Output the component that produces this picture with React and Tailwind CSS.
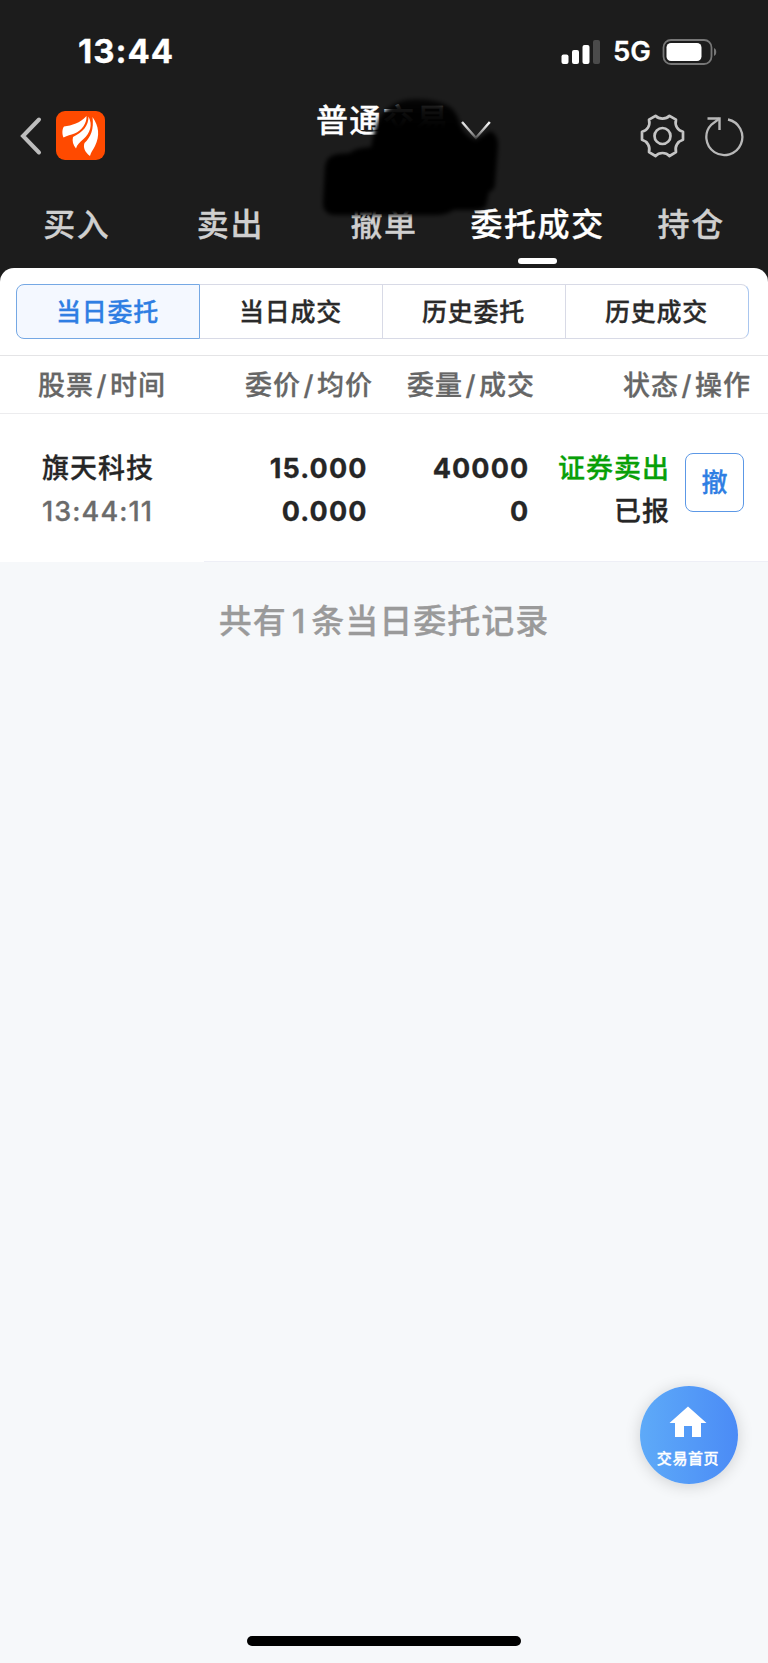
import { useState } from 'react';

const tabs = ['买入', '卖出', '撤单', '委托成交', '持仓'];
const segments = ['当日委托', '当日成交', '历史委托', '历史成交'];
const columns = [
  { top: '股票', bottom: '时间', className: 'w-[160px]' },
  { top: '委价', bottom: '均价', className: 'w-[175px] justify-end' },
  { top: '委量', bottom: '成交', className: 'w-[162px] justify-end' },
  { top: '状态', bottom: '操作', className: 'flex-1 justify-end' },
];

const orders = [
  {
    id: 1,
    name: '旗天科技',
    time: '13:44:11',
    price: '15.000',
    avg: '0.000',
    amount: '40000',
    filled: '0',
    side: '证券卖出',
    status: '已报',
  },
];

function StatusBar() {
  return (
    <div className="flex h-[102px] items-center justify-between pl-[78px] pr-[50px] pt-px text-white">
      <span className="text-[33px] font-bold leading-none tracking-[1px]">13:44</span>
      <div className="flex items-center">
        <svg width="40" height="26" viewBox="0 0 40 26" fill="#fff">
          <rect x="0.5" y="15.5" width="7" height="9.5" rx="2" />
          <rect x="11" y="11" width="7" height="14" rx="2" />
          <rect x="21.5" y="6" width="7" height="19" rx="2" />
          <rect x="32" y="1" width="7" height="24" rx="2" fill="#4b4b4b" />
        </svg>
        <span className="ml-[12px] w-[39px] text-[27.5px] font-semibold leading-none">5G</span>
        <svg className="ml-[10px]" width="56" height="26" viewBox="0 0 56 26">
          <rect x="1.5" y="1" width="48" height="24" rx="7.5" fill="none" stroke="#777" strokeWidth="1.8" />
          <rect x="4.5" y="4" width="35" height="18" rx="4.5" fill="#fff" />
          <path d="M52 9c3 1.2 3 6.8 0 8z" fill="#777" />
        </svg>
      </div>
    </div>
  );
}

function Header() {
  return (
    <div className="flex h-[82px] items-start justify-between pl-[19px] pr-[24px]">
      <div className="flex w-[297px] items-center pt-[9px]">
        <svg width="24" height="40" viewBox="0 0 24 40" fill="none" stroke="#bdbdbd" strokeWidth="4" strokeLinecap="round">
          <path d="M20 3.500L4 20l16 16.500" />
        </svg>
        <svg className="ml-[13px]" width="49" height="49" viewBox="0 0 49 49" fill="#fff">
          <rect width="49" height="49" rx="9" fill="#ff4a00" />
          <path d="M30.500 5C24 12 16 14.500 8 15.500 6 18 6 23 7.500 26.500c4-2 7-2.500 11-4C26 19.500 31 12 30.500 5z" />
          <path d="M32.500 5.500C32.500 15 27 21 17 26c-1 4 0 8 3 11.500 1-4 4-6.500 7.500-9.500C34 22 37 14 32.500 5.500z" />
          <path d="M36.500 6C38 18 35 26 28.500 32c-1.500 4 0 9 5.500 13 1-4 3-6 5-10 5-10 4-20-2.500-29z" />
        </svg>
      </div>
      <div className="flex w-[176px] items-start text-white">
        <span className="w-[136px] whitespace-nowrap pt-px text-[32px] font-medium leading-[36px] tracking-[1.3px]">
          普通交易
        </span>
        <svg className="ml-[9px] mt-[18px]" width="32" height="22" viewBox="0 0 32 22" fill="none" strokeWidth="2.5">
          <defs>
            <linearGradient id="fade" x1="0" y1="0" x2="0" y2="20" gradientUnits="userSpaceOnUse">
              <stop offset="0.2" stopColor="#f2f2f2" />
              <stop offset="1" stopColor="#555" />
            </linearGradient>
          </defs>
          <path d="M2 2l14 16L30 2" stroke="url(#fade)" />
        </svg>
      </div>
      <div className="flex w-[252px] items-center justify-end pt-[12px]">
        <svg width="45" height="44" viewBox="0 0 45 44" fill="none" stroke="#c4c4c4" strokeWidth="2.7" strokeLinejoin="round">
          <path d="M15.500 1.800C19 5.500 26 5.500 29.500 1.800L36 5.600C34.500 11.500 37.500 16.500 43 17.800V25.800C37.500 27.500 34.500 32.500 36 38.200L29.500 42C26 38 19 38 15.500 42L9 38.200C10.500 32.500 7.500 27.500 2 25.800V17.800C7.500 16.500 10.500 11.500 9 5.600Z" />
          <circle cx="22.5" cy="22" r="8" />
        </svg>
        <svg className="ml-[19px]" width="40" height="42" viewBox="0 0 40 42" fill="none" stroke="#b8b8b8" strokeWidth="2.3">
          <path d="M24 4.500A18 18 0 1 1 7.500 9.500L15.500 3.500" />
          <path d="M3.500 3.500H15.500V15" strokeWidth="2.4" />
        </svg>
      </div>
    </div>
  );
}

// Hand-drawn redaction over the account name
function Scribble() {
  return (
    <svg className="pointer-events-none absolute left-[310px] top-[90px]" width="200" height="136" viewBox="310 90 200 136">
      <defs>
        <filter id="soft" x="-10%" y="-10%" width="120%" height="120%">
          <feGaussianBlur stdDeviation="2.2" />
        </filter>
        <linearGradient id="top" x1="0" y1="98" x2="0" y2="140" gradientUnits="userSpaceOnUse">
          <stop offset="0" stopColor="#000" stopOpacity="0.75" />
          <stop offset="0.25" stopColor="#000" stopOpacity="0.93" />
          <stop offset="0.7" stopColor="#000" />
        </linearGradient>
      </defs>
      <path
        filter="url(#soft)"
        d="M372 142Q375 122 384 112Q396 99 416 99Q438 99 450 107Q457 112 460 124Q464 136 476 140L490 131Q498 134 498 145L495 184Q495 190 489 192L486 206Q484 210 474 210L454 210Q446 215 436 215L334 215Q323 214 323 203L325 166Q327 155 338 154L350 153Q354 148 371 147Z"
        fill="url(#top)"
      />
    </svg>
  );
}

function Tabs() {
  const [active, setActive] = useState('委托成交');
  return (
    <nav className="grid h-[84px] grid-cols-5">
      {tabs.map((tab) => (
        <button
          key={tab}
          onClick={() => setActive(tab)}
          className={`flex flex-col items-center whitespace-nowrap pt-[17px] text-[32px] font-medium leading-[48px] tracking-[1.6px] ${
            active === tab ? 'text-white' : 'text-[#cfcfcf]'
          }`}
        >
          {tab}
          {active === tab && <span className="mt-[9px] h-[6px] w-[39px] rounded-full bg-white" />}
        </button>
      ))}
    </nav>
  );
}

function Segments() {
  const [active, setActive] = useState(0);
  return (
    <div className="h-[88px] border-b border-[#e4e4e6] pl-[16px] pr-[19px] pt-[16px]">
      <div className="grid h-[55px] grid-cols-[184px_183px_183px_183px]">
        {segments.map((label, i) => (
          <button
            key={label}
            onClick={() => setActive(i)}
            className={`border-y border-r pr-px pt-[2px] text-[25px] font-medium tracking-[0.7px] first:rounded-l-lg first:border-l last:rounded-r-lg last:border-r-[#a9c6ef] ${
              active === i
                ? 'border-[#75a8e4] bg-[#f4f8ff] text-[#2f7ee3]'
                : 'border-[#d8dae6] bg-white text-[#2a2a2a]'
            }`}
          >
            {label}
          </button>
        ))}
      </div>
    </div>
  );
}

function OrderTable() {
  return (
    <div>
      <div className="flex h-[58px] items-center border-b border-[#ececee] pl-[38px] pr-[17px] pt-[3px] text-[27px] font-medium tracking-[1px] text-[#666]">
        {columns.map((c) => (
          <div key={c.top} className={`flex ${c.className}`}>
            {c.top}
            <span className="mx-[2.5px]">/</span>
            {c.bottom}
          </div>
        ))}
      </div>
      {orders.map((o) => (
        <div key={o.id} className="flex h-[147px] pl-[42px] pr-[24px] pt-[33px] text-[27px] leading-[43px] text-[#262626]">
          <div className="w-[160px] font-medium">
            <div className="tracking-[1px]">{o.name}</div>
            <div className="whitespace-nowrap tracking-[1.1px] text-[#6b6b6b]">{o.time}</div>
          </div>
          <div className="w-[166px] text-right font-bold tracking-[1.1px]">
            <div>{o.price}</div>
            <div>{o.avg}</div>
          </div>
          <div className="w-[162px] text-right font-bold tracking-[1.1px]">
            <div>{o.amount}</div>
            <div>{o.filled}</div>
          </div>
          <div className="w-[141px] text-right font-medium tracking-[1px]">
            <div className="text-[#08a008]">{o.side}</div>
            <div>{o.status}</div>
          </div>
          <button className="ml-[15px] mt-[6px] h-[59px] w-[59px] rounded-lg border border-[#5c98e6] pt-px text-[26px] font-medium leading-none text-[#2f7ee3]">
            撤
          </button>
        </div>
      ))}
      <div className="ml-[204px] h-px bg-[#eeeff6]" />
    </div>
  );
}

function HomeButton() {
  return (
    <button className="absolute left-[640px] top-[1386px] flex h-[98px] w-[98px] flex-col items-center rounded-full bg-linear-to-r from-[#5eaaf8] to-[#4b8bf6] pr-[2px] pt-[20px] text-white shadow-[0_2px_16px_rgba(0,0,0,0.16)]">
      <svg width="38" height="32" viewBox="0 0 38 32" fill="#fff">
        <path d="M19 0.500L37.500 17H32V31H23V20H15V31H6V17H0.500Z" />
      </svg>
      <span className="mt-[10px] text-[15px] font-medium leading-[22px] tracking-[0.6px]">交易首页</span>
    </button>
  );
}

export default function App() {
  return (
    <div className="relative flex h-[1663px] w-[768px] flex-col overflow-hidden bg-[#f6f8fa] font-['Inter','Noto_Sans_CJK_SC',sans-serif] [-webkit-text-stroke:0.3px]">
      <header className="h-[290px] shrink-0 bg-[#1c1c1c]">
        <StatusBar />
        <Header />
        <Tabs />
      </header>
      <main className="relative -mt-[22px] flex-1">
        <div className="rounded-t-[14px] bg-white">
          <Segments />
          <OrderTable />
        </div>
        <p className="pt-[35px] text-center text-[33px] font-medium leading-[48px] tracking-[1px] text-[#9a9a9a]">
          共有<span className="mx-[5px]">1</span>条当日委托记录
        </p>
      </main>
      <footer className="flex h-[27px] justify-center">
        <div className="h-[10px] w-[274px] rounded-full bg-black" />
      </footer>
      <Scribble />
      <HomeButton />
    </div>
  );
}
